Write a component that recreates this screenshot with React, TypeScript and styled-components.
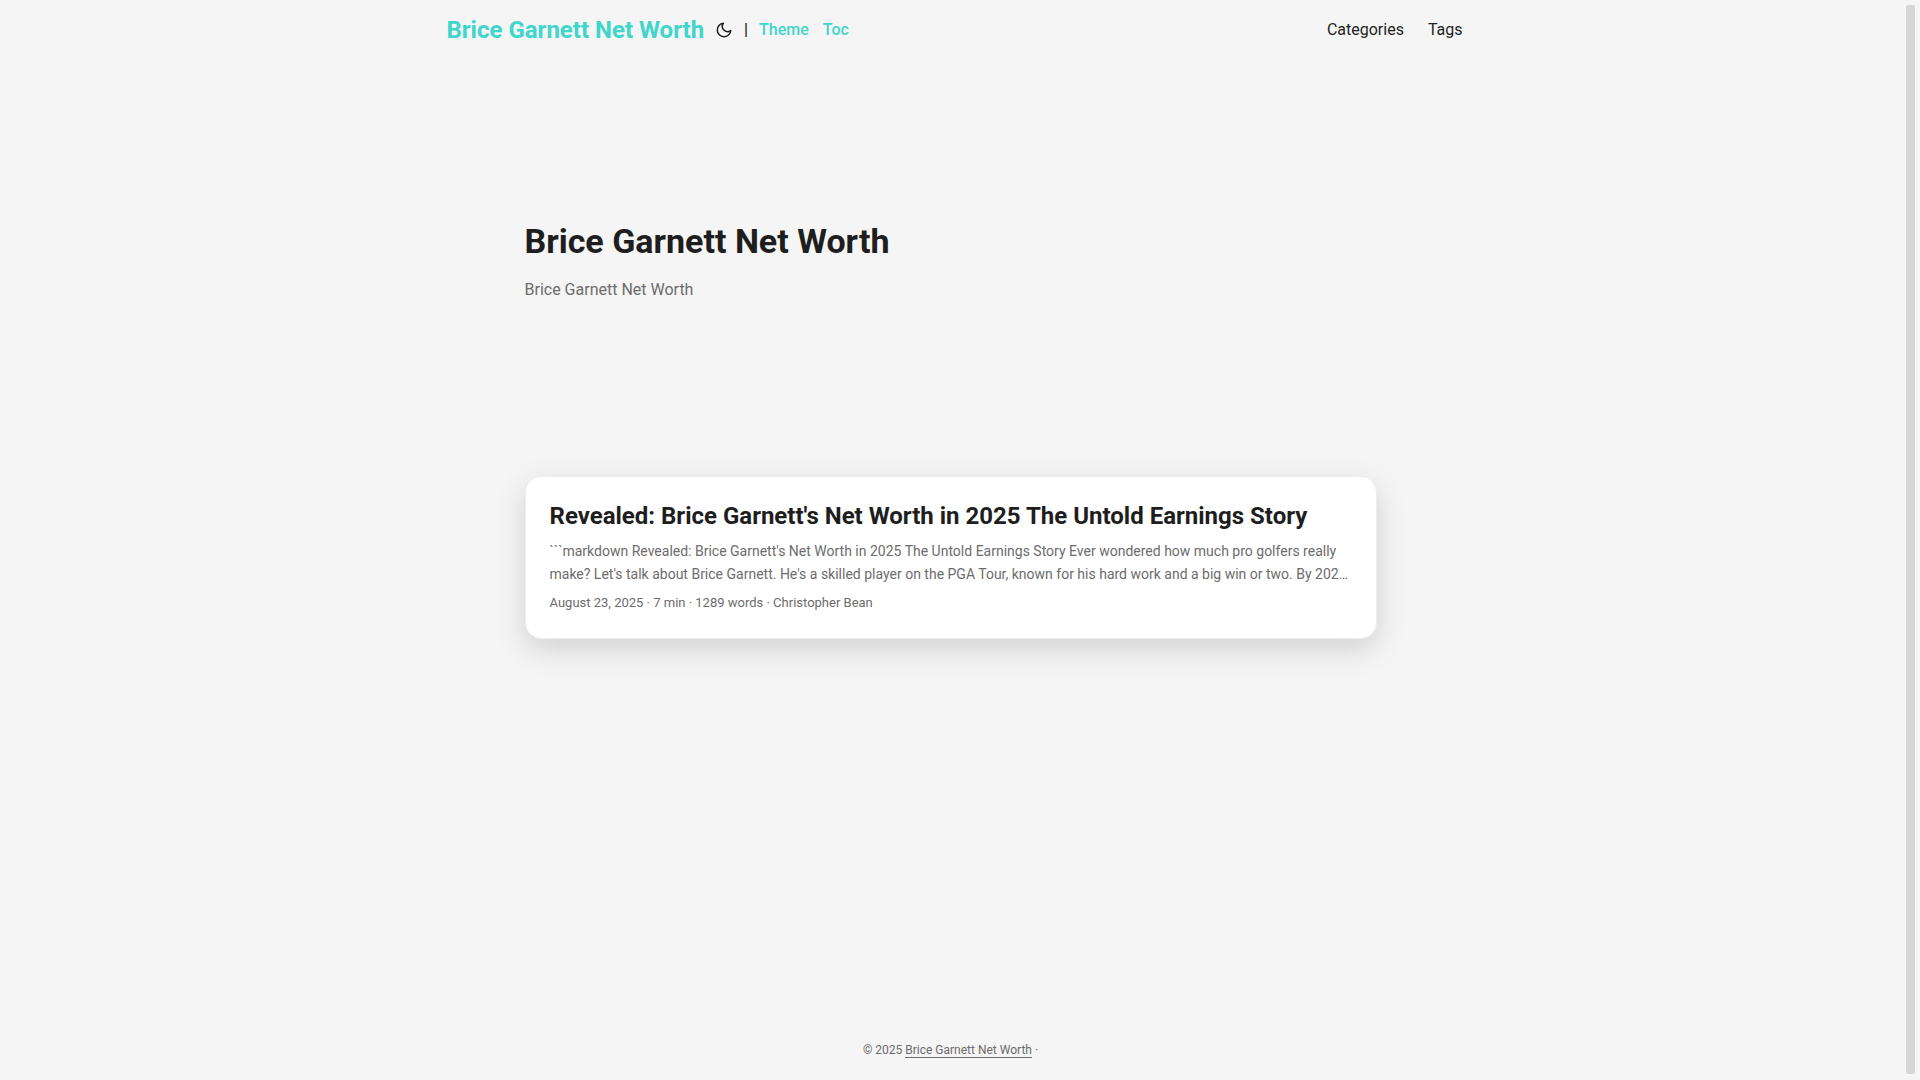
import React from "react";
import styled, { createGlobalStyle } from "styled-components";

const color = {
  page: "#f5f5f5",
  card: "#ffffff",
  primary: "#1e1e1e",
  secondary: "#6c6c6c",
  accent: "#40d6cb",
  border: "#eeeeee",
  thumb: "#d6d6d6",
};

const GlobalStyle = createGlobalStyle`
  *, *::before, *::after { box-sizing: border-box; }
  body {
    margin: 0;
    background: ${color.page};
    color: ${color.primary};
    font-family: Roboto, "Liberation Sans", sans-serif;
    font-size: 16px;
    line-height: 26px;
  }
  h1, h2, p { margin: 0; }
  a { color: inherit; text-decoration: none; }
`;

const Shell = styled.div`
  display: grid;
  grid-template-columns: minmax(0, 1fr) 19px;
  min-height: 100vh;
`;

const Page = styled.div`
  display: flex;
  flex-direction: column;
  min-height: 100vh;
`;

const ScrollTrack = styled.div`
  position: sticky;
  top: 0;
  height: 100vh;
  padding: 5px 5px 6px;
`;

const ScrollThumb = styled.div`
  height: 100%;
  border-radius: 2px;
  background: ${color.thumb};
`;

const Nav = styled.nav`
  display: flex;
  flex-wrap: wrap;
  justify-content: space-between;
  width: 100%;
  max-width: 1072px;
  margin: 0 auto;
  padding: 0 24px;
  line-height: 60px;
`;

const Brand = styled.div`
  display: flex;
  align-items: center;
  padding-left: 8px;
`;

const Logo = styled.a`
  color: ${color.accent};
  font-size: 24px;
  font-weight: 700;
`;

const ThemeToggle = styled.button`
  display: flex;
  margin: 0 8px;
  padding: 0;
  border: 0;
  background: none;
  color: ${color.primary};
  cursor: pointer;
`;

const Divider = styled.span`
  margin-right: 11px;
  font-weight: 500;
`;

const Switches = styled.div`
  display: flex;
  gap: 14px;
  font-weight: 500;
`;

const AccentLink = styled.a`
  color: ${color.accent};
`;

const Menu = styled.ul`
  display: flex;
  gap: 24px;
  margin: 0;
  padding: 0;
  list-style: none;
`;

const Main = styled.main`
  flex: 1;
  width: 100%;
  max-width: 900px;
  margin: 0 auto;
  padding: 24px;
`;

const Hero = styled.header`
  display: flex;
  flex-direction: column;
  justify-content: center;
  min-height: 320px;
  margin: 24px 0 48px;
`;

const HeroTitle = styled.h1`
  font-size: 34px;
  font-weight: 700;
  line-height: 44px;
`;

const HeroText = styled.p`
  margin: 14px 0;
  color: ${color.secondary};
`;

const Card = styled.article`
  padding: 24px 24px 26px;
  border: 1px solid ${color.border};
  border-radius: 16px;
  background: ${color.card};
  box-shadow: 0 10px 30px rgba(0, 0, 0, 0.15);
`;

const CardTitle = styled.h2`
  font-size: 24px;
  font-weight: 700;
  line-height: 31px;
`;

const Excerpt = styled.p`
  margin: 8px 0;
  color: ${color.secondary};
  font-size: 14px;
  line-height: 23px;
`;

const Meta = styled.footer`
  color: ${color.secondary};
  font-size: 13px;
  line-height: 18px;
`;

const SiteFooter = styled.footer`
  padding: 18px 24px;
  color: ${color.secondary};
  font-size: 12px;
  line-height: 24px;
  text-align: center;
`;

const FooterLink = styled.a`
  border-bottom: 1px solid ${color.secondary};
`;

function MoonIcon() {
  return (
    <svg
      width="24"
      height="18"
      viewBox="0 0 24 24"
      fill="none"
      stroke="currentColor"
      strokeWidth="2"
      strokeLinecap="round"
      strokeLinejoin="round"
      aria-hidden="true"
    >
      <path d="M21 12.79A9 9 0 1 1 11.21 3 7 7 0 0 0 21 12.79z" />
    </svg>
  );
}

export default function App() {
  return (
    <Shell>
      <GlobalStyle />
      <Page>
        <Nav>
          <Brand>
            <Logo href="#home">Brice Garnett Net Worth</Logo>
            <ThemeToggle type="button" aria-label="Toggle theme">
              <MoonIcon />
            </ThemeToggle>
            <Divider>|</Divider>
            <Switches>
              <AccentLink href="#theme">Theme</AccentLink>
              <AccentLink href="#toc">Toc</AccentLink>
            </Switches>
          </Brand>
          <Menu>
            <li>
              <a href="#categories">Categories</a>
            </li>
            <li>
              <a href="#tags">Tags</a>
            </li>
          </Menu>
        </Nav>
        <Main>
          <Hero>
            <HeroTitle>Brice Garnett Net Worth</HeroTitle>
            <HeroText>Brice Garnett Net Worth</HeroText>
          </Hero>
          <Card>
            <CardTitle>
              <a href="#post">
                Revealed: Brice Garnett's Net Worth in 2025 The Untold Earnings Story
              </a>
            </CardTitle>
            <Excerpt>
              ```markdown Revealed: Brice Garnett's Net Worth in 2025 The Untold
              Earnings Story Ever wondered how much pro golfers really make? Let's
              talk about Brice Garnett. He's a skilled player on the PGA Tour, known
              for his hard work and a big win or two. By 202…
            </Excerpt>
            <Meta>August 23, 2025 · 7 min · 1289 words · Christopher Bean</Meta>
          </Card>
        </Main>
        <SiteFooter>
          © 2025 <FooterLink href="#home">Brice Garnett Net Worth</FooterLink> ·
        </SiteFooter>
      </Page>
      <ScrollTrack aria-hidden="true">
        <ScrollThumb />
      </ScrollTrack>
    </Shell>
  );
}
